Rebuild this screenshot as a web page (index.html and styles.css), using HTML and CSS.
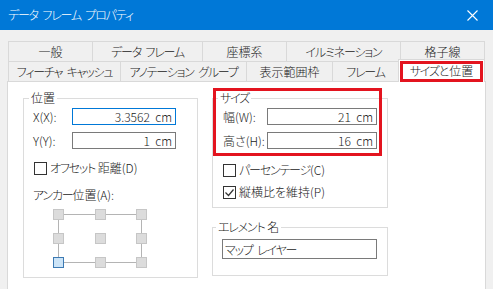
FILE: index.html
```html
<!DOCTYPE html>
<html lang="ja">
<head>
<meta charset="utf-8">
<title>データ フレーム プロパティ</title>
<link rel="stylesheet" href="styles.css">
</head>
<body>
<div class="window">
  <header class="titlebar">
    <span class="title kana">データ フレーム プロパティ</span>
    <svg class="close" width="11" height="11" viewBox="0 0 11 11"><path d="M0.5 0.5 L10.5 10.5 M10.5 0.5 L0.5 10.5" stroke="#fff" stroke-width="1.1" fill="none"/></svg>
  </header>
  <div class="tabs">
    <div class="tabrow row1">
      <div class="tab">一般</div>
      <div class="tab kana">データ フレーム</div>
      <div class="tab">座標系</div>
      <div class="tab kana">イルミネーション</div>
      <div class="tab last">格子線</div>
    </div>
    <div class="tabrow row2">
      <div class="tab kana">フィーチャ キャッシュ</div>
      <div class="tab kana">アノテーション グループ</div>
      <div class="tab">表示範囲枠</div>
      <div class="tab kana">フレーム</div>
      <div class="tab last selected"><span class="kana">サイズ</span>と位置<span class="mark tabmark"></span></div>
    </div>
  </div>
  <div class="panelwrap">
    <div class="panel">
      <div class="col col-left">
        <fieldset class="group group-pos">
          <legend>位置</legend>
          <div class="field">
            <span class="flabel flabel-left">X(X):</span>
            <input class="box box-left focused" type="text" value="3.3562  cm" readonly>
          </div>
          <div class="field field-next">
            <span class="flabel flabel-left">Y(Y):</span>
            <input class="box box-left" type="text" value="1  cm" readonly>
          </div>
          <div class="check check-offset"><span class="cb"></span><span><span class="kana">オフセット</span> 距離(D)</span></div>
          <div class="anchor-label"><span class="kana">アンカー</span>位置(A):</div>
          <svg class="anchor" width="96" height="60" viewBox="0 0 96 60">
            <g stroke="#b4b4b4" stroke-width="1" fill="none">
              <path d="M11 5.5 H42 M53 5.5 H83 M11 53.5 H42 M53 53.5 H83 M5.5 11 V24 M5.5 35 V48 M88.5 11 V24 M88.5 35 V48"/>
            </g>
            <g fill="#dcdcdc" stroke="#c6c6c6" stroke-width="1">
              <rect x="0.5" y="0.5" width="10" height="10"/>
              <rect x="42.5" y="0.5" width="10" height="10"/>
              <rect x="83.5" y="0.5" width="10" height="10"/>
              <rect x="0.5" y="24.5" width="10" height="10"/>
              <rect x="42.5" y="24.5" width="10" height="10"/>
              <rect x="83.5" y="24.5" width="10" height="10"/>
              <rect x="42.5" y="48.5" width="10" height="10"/>
              <rect x="83.5" y="48.5" width="10" height="10"/>
            </g>
            <rect x="0.5" y="48.5" width="10" height="10" fill="#cce4f7" stroke="#3d7ab3" stroke-width="1"/>
          </svg>
        </fieldset>
      </div>
      <div class="col col-right">
        <span class="mark sizemark"></span>
        <fieldset class="group group-size">
          <legend class="kana">サイズ</legend>
          <div class="field">
            <span class="flabel flabel-right">幅(W):</span>
            <input class="box box-right" type="text" value="21  cm" readonly>
          </div>
          <div class="field field-next">
            <span class="flabel flabel-right">高さ(H):</span>
            <input class="box box-right" type="text" value="16  cm" readonly>
          </div>
          <div class="check check-percent"><span class="cb"></span><span><span class="kana">パーセンテージ</span>(C)</span></div>
          <div class="check check-keep"><span class="cb"><svg width="11" height="11" viewBox="0 0 11 11"><path d="M1.5 5.5 L4.5 8.5 L9.5 2.5" stroke="#333" stroke-width="1.2" fill="none"/></svg></span><span>縦横比を維持(P)</span></div>
        </fieldset>
        <fieldset class="group group-name">
          <legend><span class="kana">エレメント</span> 名</legend>
          <input class="box box-name kana" type="text" value="マップ レイヤー" readonly>
        </fieldset>
      </div>
    </div>
  </div>
</div>
</body>
</html>
```

FILE: styles.css
```css
* { box-sizing: border-box; }

html, body {
  margin: 0;
  padding: 0;
}

body {
  width: 493px;
  height: 289px;
  overflow: hidden;
  background: #f0f0f0;
  font-family: "Noto Sans CJK JP", "Noto Sans", sans-serif;
  font-weight: 300;
  font-feature-settings: "palt";
  font-size: 12px;
  color: #1a1a1a;
}

.kana {
  letter-spacing: -1.2px;
  word-spacing: 3px;
}

.titlebar {
  height: 30px;
  background: #0078d7;
  color: #fff;
  display: flex;
  align-items: center;
  justify-content: space-between;
  padding: 0 15px 0 8px;
}

.title {
  line-height: 16px;
}

.close { display: block; }

.tabs {
  padding: 11px 8px 0 8px;
}

.tabrow {
  display: grid;
  height: 20px;
}

.row1 { grid-template-columns: 84px 110px 84px 114px 85px; }
.row2 { grid-template-columns: 112px 126px 86px 66px 87px; }

.tab {
  border-top: 1px solid #d9d9d9;
  border-left: 1px solid #d9d9d9;
  background: #f0f0f0;
  text-align: center;
  line-height: 19px;
  white-space: nowrap;
}

.tab.last { border-right: 1px solid #d9d9d9; }

.tab.selected {
  position: relative;
  z-index: 2;
  background: #fff;
  margin-top: -2px;
  height: 23px;
  line-height: 22px;
}

.mark {
  position: absolute;
  border: 3px solid #e3141f;
  pointer-events: none;
  z-index: 3;
}

.tabmark {
  left: 1px;
  top: 1px;
  width: 83px;
  height: 21px;
}

.panelwrap {
  padding: 0 7px;
}

.panel {
  position: relative;
  z-index: 1;
  background: #fff;
  border: 1px solid #d9d9d9;
  border-bottom: none;
  height: 208px;
  padding: 8px 0 0 15px;
  display: flex;
  gap: 14px;
  align-items: flex-start;
}

.col-left { width: 175px; }
.col-right { width: 176px; position: relative; }

.sizemark {
  left: 1px;
  top: -2px;
  width: 169px;
  height: 68px;
}

.group {
  margin: 0;
  min-width: 0;
  border: 1px solid #dcdcdc;
  padding: 2px 9px 8px 9px;
}

.group legend {
  margin-left: -4px;
  padding: 0 2px;
  line-height: 16px;
}

.group-size { padding-bottom: 7px; }

.group-name {
  margin-top: 11px;
  padding: 4px 9px 16px 9px;
}

.group-name legend { margin-left: -6px; }

.field {
  display: flex;
  align-items: center;
  height: 17px;
}

.field-next { margin-top: 7px; }

.flabel { line-height: 16px; white-space: nowrap; }
.flabel-left { width: 39px; }
.flabel-right { width: 45px; padding-left: 1px; }

.box {
  height: 17px;
  border: 1px solid #7a7a7a;
  background: #fff;
  font: inherit;
  font-size: 12px;
  color: #1a1a1a;
  text-align: right;
  padding: 0 3px 0 2px;
  margin: 0;
  outline: none;
  white-space: pre;
}

.box-left { width: 104px; }
.box-right { width: 110px; }
.box.focused { border-color: #0078d7; }

.box-name {
  display: block;
  width: 155px;
  height: 20px;
  text-align: left;
  padding-left: 2px;
}

.check {
  display: flex;
  align-items: center;
  height: 16px;
  line-height: 16px;
  gap: 3px;
  padding-left: 1px;
}

.check-offset { margin-top: 11px; }
.check-percent { margin-top: 13px; }
.check-keep { margin-top: 6px; }

.cb {
  width: 13px;
  height: 13px;
  border: 1px solid #333;
  background: #fff;
  display: flex;
  align-items: center;
  justify-content: center;
}

.cb svg { display: block; }

.anchor-label {
  margin-top: 11px;
  line-height: 16px;
}

.anchor {
  display: block;
  margin: 6px 0 0 20px;
}
```
